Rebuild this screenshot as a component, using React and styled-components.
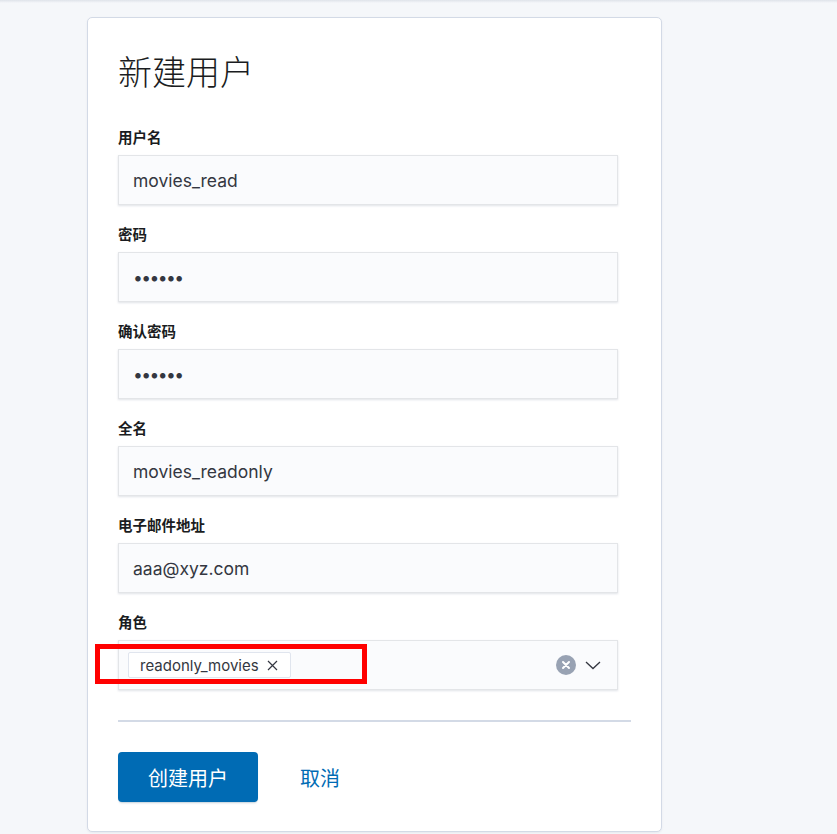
import React from "react";
import styled, { createGlobalStyle } from "styled-components";

const Global = createGlobalStyle`
  html, body { margin: 0; padding: 0; background: #f5f7fa; }
  body { font-family: Inter, "Noto Sans CJK SC", sans-serif; color: #343741; }
  * { box-sizing: border-box; }
`;

const Page = styled.div`
  position: relative;
  min-height: 834px;
  padding: 17px 0 0 87px;
  &::before {
    content: "";
    position: absolute;
    left: 0; right: 0; top: 0;
    height: 3px;
    background: linear-gradient(#dfe3ea, #f5f7fa);
  }
`;

const Card = styled.div`
  width: 575px;
  background: #fff;
  border: 1px solid #d3dae6;
  border-radius: 5px;
  box-shadow: 0 1px 2px rgba(152, 162, 179, 0.15);
  padding: 30px 30px 29px 30px;
`;

const Title = styled.h1`
  margin: 2px 0 36px;
  font-family: "Noto Sans CJK SC", sans-serif;
  font-weight: 300;
  font-size: 34px;
  line-height: 41px;
  color: #1a1c21;
`;

const Field = styled.div`
  display: flex;
  flex-direction: column;
  gap: 6px;
  max-width: 500px;
  margin-bottom: 19px;
  &:last-of-type { margin-bottom: 0; }
`;

const Label = styled.label`
  font-family: Inter, "Noto Sans CJK SC", sans-serif;
  font-weight: 700;
  font-size: 14.5px;
  line-height: 22px;
  color: #1a1c21;
`;

const Input = styled.input`
  width: 100%;
  height: 50px;
  border: none;
  outline: none;
  padding: 0 15px;
  background: #fafbfd;
  font-family: Inter, sans-serif;
  font-size: 17.5px;
  color: #343741;
  border-radius: 0;
  box-shadow: inset 0 0 0 1px rgba(32, 38, 47, 0.1), 0 1px 2px rgba(152, 162, 179, 0.3);
  letter-spacing: ${(p) => (p.$masked ? "-1.6px" : "normal")};
`;

const ComboWrap = styled.div`
  position: relative;
  width: 100%;
  height: 50px;
  background: #fafbfd;
  box-shadow: inset 0 0 0 1px rgba(32, 38, 47, 0.1), 0 1px 2px rgba(152, 162, 179, 0.3);
  display: flex;
  align-items: center;
  padding: 0 16px 0 10px;
`;

const Pills = styled.div`
  flex: 1;
  display: flex;
  align-items: center;
`;

const Pill = styled.span`
  display: inline-flex;
  align-items: center;
  gap: 8px;
  height: 26px;
  padding: 0 12px 0 11px;
  background: #fff;
  border: 1px solid #e0e5ee;
  border-radius: 2px;
  font-family: Inter, sans-serif;
  font-size: 15px;
  color: #343741;
`;

const Actions = styled.div`
  display: flex;
  align-items: center;
  gap: 8px;
`;

const Highlight = styled.div`
  position: absolute;
  left: -23px;
  top: 4px;
  width: 272px;
  height: 40px;
  border: 5px solid #ff0000;
  pointer-events: none;
`;

const Divider = styled.hr`
  border: none;
  height: 2px;
  background: #d3dae6;
  margin: 30px 0 30px;
`;

const Footer = styled.div`
  display: flex;
  align-items: center;
  gap: 42px;
`;

const PrimaryButton = styled.button`
  width: 140px;
  height: 50px;
  border: none;
  border-radius: 4px;
  background: #006bb4;
  color: #fff;
  font-family: "Noto Sans CJK SC", sans-serif;
  font-size: 20px;
  box-shadow: 0 2px 2px -1px rgba(54, 97, 126, 0.3);
  cursor: pointer;
`;

const LinkButton = styled.button`
  border: none;
  background: none;
  padding: 0;
  color: #006bb4;
  font-family: "Noto Sans CJK SC", sans-serif;
  font-size: 20px;
  cursor: pointer;
`;

const fields = [
  { label: "用户名", value: "movies_read" },
  { label: "密码", value: "••••••", masked: true },
  { label: "确认密码", value: "••••••", masked: true },
  { label: "全名", value: "movies_readonly" },
  { label: "电子邮件地址", value: "aaa@xyz.com" },
];

export default function App() {
  return (
    <>
      <Global />
      <Page>
        <Card>
          <Title>新建用户</Title>
          {fields.map((f) => (
            <Field key={f.label}>
              <Label>{f.label}</Label>
              <Input type="text" $masked={f.masked} value={f.value} readOnly />
            </Field>
          ))}
          <Field>
            <Label>角色</Label>
            <ComboWrap>
              <Highlight />
              <Pills>
                <Pill>
                  readonly_movies
                  <svg width="11" height="11" viewBox="0 0 11 11">
                    <path d="M1 1 L10 10 M10 1 L1 10" stroke="#343741" strokeWidth="1.2" />
                  </svg>
                </Pill>
              </Pills>
              <Actions>
                <svg width="20" height="20" viewBox="0 0 20 20">
                  <circle cx="10" cy="10" r="10" fill="#98a2b3" />
                  <path d="M7 7 L13 13 M13 7 L7 13" stroke="#fff" strokeWidth="2" strokeLinecap="round" />
                </svg>
                <svg width="18" height="18" viewBox="0 0 18 18">
                  <path d="M2 6 L9 12.5 L16 6" fill="none" stroke="#343741" strokeWidth="1.3" />
                </svg>
              </Actions>
            </ComboWrap>
          </Field>
          <Divider />
          <Footer>
            <PrimaryButton>创建用户</PrimaryButton>
            <LinkButton>取消</LinkButton>
          </Footer>
        </Card>
      </Page>
    </>
  );
}
